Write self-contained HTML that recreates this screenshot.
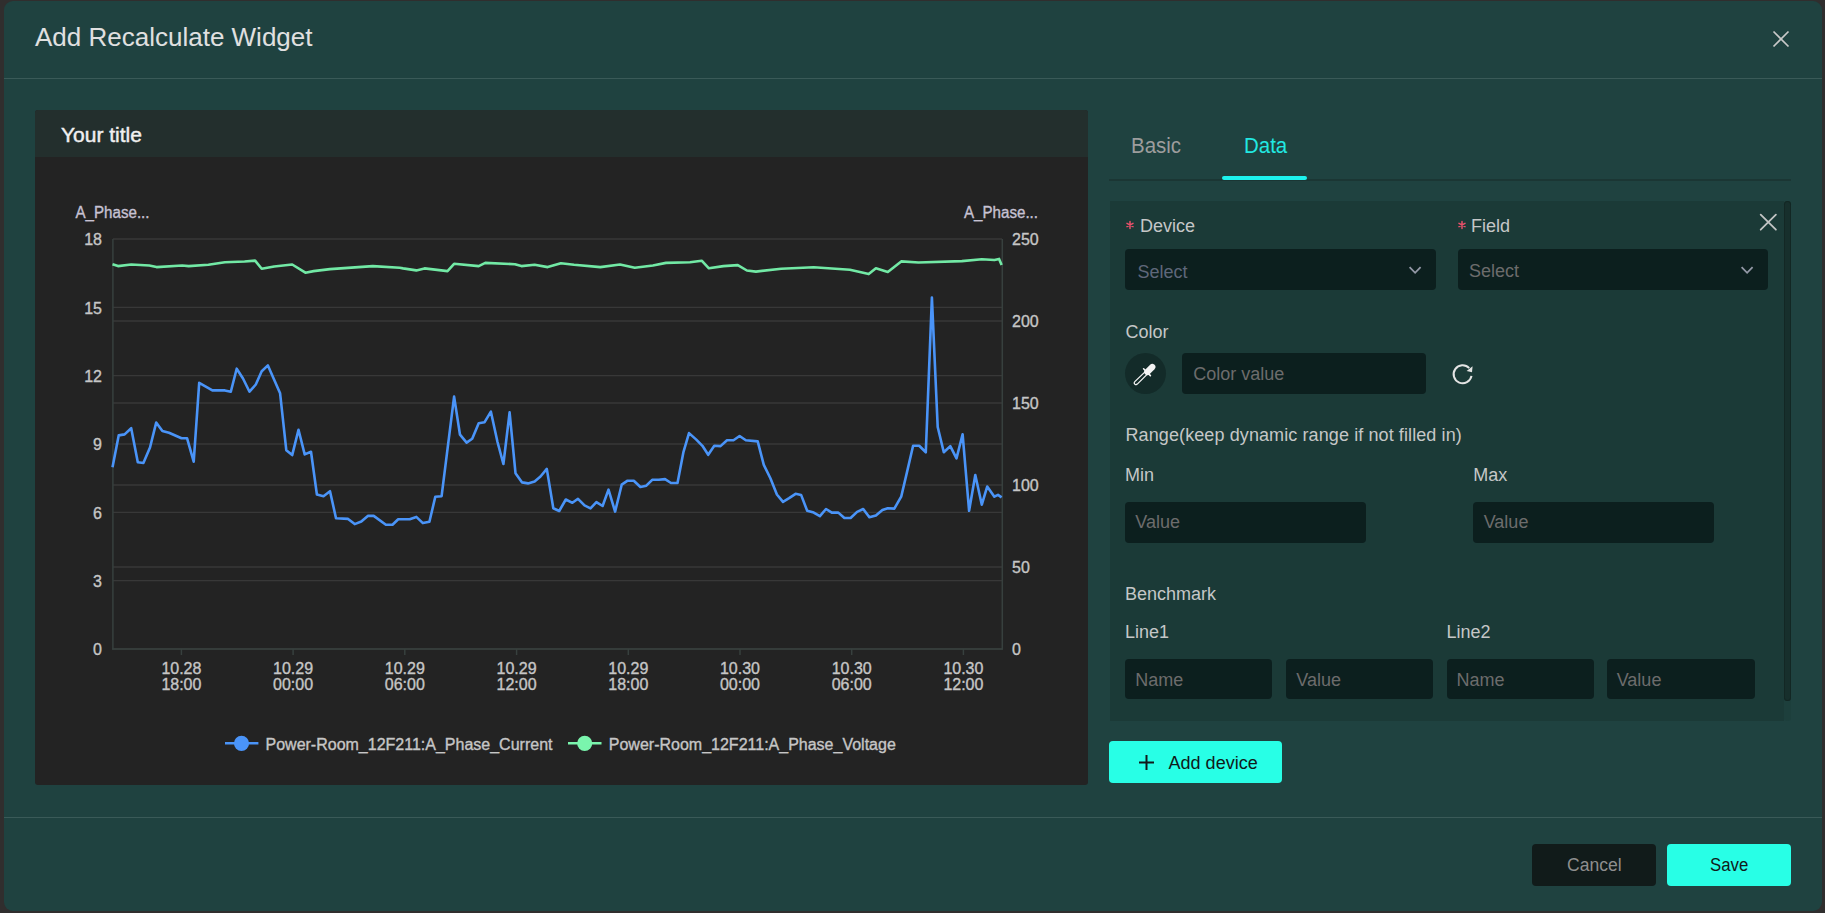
<!DOCTYPE html>
<html><head><meta charset="utf-8">
<style>
*{box-sizing:border-box;margin:0;padding:0}
html,body{width:1825px;height:913px;overflow:hidden;background:#302e2e;font-family:"Liberation Sans",sans-serif}
.a{position:absolute;white-space:nowrap}
#modal{position:absolute;left:4px;top:1px;width:1818px;height:910px;border-radius:9px;background:#1f4240}
.t{position:absolute;white-space:nowrap;line-height:1}
.inp{position:absolute;background:#0c1f1e;border-radius:4px}
.ph{position:absolute;white-space:nowrap;line-height:1;font-size:18px;color:#6c6c6c}
.lbl{position:absolute;white-space:nowrap;line-height:1;font-size:18px;color:#c5c7c7}
</style></head><body>
<div id="modal"></div>
<!-- header -->
<div class="t" style="left:35px;top:23.8px;font-size:26px;color:#e0e0e0">Add Recalculate Widget</div>
<svg class="a" style="left:1770.4px;top:28.4px" width="22" height="22" viewBox="0 0 22 22"><path d="M3.5 3.5 L18.5 18.5 M18.5 3.5 L3.5 18.5" stroke="#c9c9c9" stroke-width="1.7"/></svg>
<div class="a" style="left:4px;top:78px;width:1818px;height:1px;background:#3a5a58"></div>

<!-- chart panel -->
<div class="a" style="left:35px;top:110px;width:1053px;height:675px;background:#232323;border-radius:3px;overflow:hidden">
  <div class="a" style="left:0;top:0;width:1053px;height:47px;background:#232f2d"></div>
</div>
<div class="t" style="left:61px;top:124px;font-size:21px;color:#f0f0f0;-webkit-text-stroke:0.45px #f0f0f0">Your title</div>
<svg class="a" style="left:0;top:0;font-family:'Liberation Sans',sans-serif" width="1825" height="913" viewBox="0 0 1825 913"><!--CHART-->
<line x1="113" x2="1002" y1="649.00" y2="649.00" stroke="#383838" stroke-width="1.3"/>
<line x1="113" x2="1002" y1="580.67" y2="580.67" stroke="#383838" stroke-width="1.3"/>
<line x1="113" x2="1002" y1="512.33" y2="512.33" stroke="#383838" stroke-width="1.3"/>
<line x1="113" x2="1002" y1="444.00" y2="444.00" stroke="#383838" stroke-width="1.3"/>
<line x1="113" x2="1002" y1="375.67" y2="375.67" stroke="#383838" stroke-width="1.3"/>
<line x1="113" x2="1002" y1="307.33" y2="307.33" stroke="#383838" stroke-width="1.3"/>
<line x1="113" x2="1002" y1="567.00" y2="567.00" stroke="#383838" stroke-width="1.3"/>
<line x1="113" x2="1002" y1="485.00" y2="485.00" stroke="#383838" stroke-width="1.3"/>
<line x1="113" x2="1002" y1="403.00" y2="403.00" stroke="#383838" stroke-width="1.3"/>
<line x1="113" x2="1002" y1="321.00" y2="321.00" stroke="#383838" stroke-width="1.3"/>
<line x1="113" x2="1002" y1="239.00" y2="239.00" stroke="#383838" stroke-width="1.3"/>
<line x1="112.9" x2="112.9" y1="239" y2="649.5" stroke="#37403e" stroke-width="1.5"/>
<line x1="1002.3" x2="1002.3" y1="239" y2="649.5" stroke="#37403e" stroke-width="1.5"/>
<line x1="112" x2="1003" y1="649" y2="649" stroke="#37403e" stroke-width="1.5"/>
<line x1="181.4" x2="181.4" y1="649" y2="655" stroke="#37403e" stroke-width="1.5"/>
<line x1="293.1" x2="293.1" y1="649" y2="655" stroke="#37403e" stroke-width="1.5"/>
<line x1="404.8" x2="404.8" y1="649" y2="655" stroke="#37403e" stroke-width="1.5"/>
<line x1="516.6" x2="516.6" y1="649" y2="655" stroke="#37403e" stroke-width="1.5"/>
<line x1="628.3" x2="628.3" y1="649" y2="655" stroke="#37403e" stroke-width="1.5"/>
<line x1="740.0" x2="740.0" y1="649" y2="655" stroke="#37403e" stroke-width="1.5"/>
<line x1="851.7" x2="851.7" y1="649" y2="655" stroke="#37403e" stroke-width="1.5"/>
<line x1="963.4" x2="963.4" y1="649" y2="655" stroke="#37403e" stroke-width="1.5"/>
<g stroke="#c6c6c6" stroke-width="0.35">
<text x="102" y="655.2" text-anchor="end" fill="#c6c6c6" font-size="16">0</text>
<text x="102" y="586.9" text-anchor="end" fill="#c6c6c6" font-size="16">3</text>
<text x="102" y="518.5" text-anchor="end" fill="#c6c6c6" font-size="16">6</text>
<text x="102" y="450.2" text-anchor="end" fill="#c6c6c6" font-size="16">9</text>
<text x="102" y="381.9" text-anchor="end" fill="#c6c6c6" font-size="16">12</text>
<text x="102" y="313.5" text-anchor="end" fill="#c6c6c6" font-size="16">15</text>
<text x="102" y="245.2" text-anchor="end" fill="#c6c6c6" font-size="16">18</text>
<text x="1012" y="655.2" fill="#c6c6c6" font-size="16">0</text>
<text x="1012" y="573.2" fill="#c6c6c6" font-size="16">50</text>
<text x="1012" y="491.2" fill="#c6c6c6" font-size="16">100</text>
<text x="1012" y="409.2" fill="#c6c6c6" font-size="16">150</text>
<text x="1012" y="327.2" fill="#c6c6c6" font-size="16">200</text>
<text x="1012" y="245.2" fill="#c6c6c6" font-size="16">250</text>
<text x="75.5" y="218" fill="#c7c2d3" stroke="#c7c2d3" font-size="16" textLength="74" lengthAdjust="spacingAndGlyphs">A_Phase...</text>
<text x="964" y="218" fill="#c7c2d3" stroke="#c7c2d3" font-size="16" textLength="74" lengthAdjust="spacingAndGlyphs">A_Phase...</text>
<text x="181.4" y="673.8" text-anchor="middle" fill="#c6c6c6" font-size="16">10.28</text>
<text x="181.4" y="689.7" text-anchor="middle" fill="#c6c6c6" font-size="16">18:00</text>
<text x="293.1" y="673.8" text-anchor="middle" fill="#c6c6c6" font-size="16">10.29</text>
<text x="293.1" y="689.7" text-anchor="middle" fill="#c6c6c6" font-size="16">00:00</text>
<text x="404.8" y="673.8" text-anchor="middle" fill="#c6c6c6" font-size="16">10.29</text>
<text x="404.8" y="689.7" text-anchor="middle" fill="#c6c6c6" font-size="16">06:00</text>
<text x="516.6" y="673.8" text-anchor="middle" fill="#c6c6c6" font-size="16">10.29</text>
<text x="516.6" y="689.7" text-anchor="middle" fill="#c6c6c6" font-size="16">12:00</text>
<text x="628.3" y="673.8" text-anchor="middle" fill="#c6c6c6" font-size="16">10.29</text>
<text x="628.3" y="689.7" text-anchor="middle" fill="#c6c6c6" font-size="16">18:00</text>
<text x="740.0" y="673.8" text-anchor="middle" fill="#c6c6c6" font-size="16">10.30</text>
<text x="740.0" y="689.7" text-anchor="middle" fill="#c6c6c6" font-size="16">00:00</text>
<text x="851.7" y="673.8" text-anchor="middle" fill="#c6c6c6" font-size="16">10.30</text>
<text x="851.7" y="689.7" text-anchor="middle" fill="#c6c6c6" font-size="16">06:00</text>
<text x="963.4" y="673.8" text-anchor="middle" fill="#c6c6c6" font-size="16">10.30</text>
<text x="963.4" y="689.7" text-anchor="middle" fill="#c6c6c6" font-size="16">12:00</text>
</g>
<path d="M112.5 264.2 L118.0 266.1 L131.2 264.5 L149.3 265.5 L156.5 267.1 L182.2 265.5 L188.7 266.1 L208.4 264.8 L224.9 262.2 L244.6 261.5 L255.1 260.6 L261.7 268.8 L274.2 266.5 L292.2 264.5 L305.4 272.7 L313.6 271.1 L330.0 269.1 L372.8 266.1 L399.7 267.8 L403.1 268.4 L416.3 270.4 L424.5 268.4 L447.5 271.1 L454.1 263.8 L478.7 266.1 L485.3 262.9 L514.9 264.2 L521.4 266.1 L534.6 264.8 L547.7 267.1 L560.9 263.2 L574.0 264.8 L600.3 267.1 L620.0 264.5 L634.8 267.8 L652.9 265.5 L666.0 262.9 L690.0 262.2 L701.7 260.7 L708.9 268.3 L723.4 266.1 L737.8 265.1 L746.9 270.5 L755.9 271.6 L781.2 268.7 L813.7 267.2 L849.9 269.8 L868.7 274.1 L875.9 268.3 L887.8 271.9 L901.2 261.4 L918.5 262.5 L961.9 261.1 L981.8 259.3 L994.4 260.0 L999.1 258.9 L1001.6 265.1" fill="none" stroke="#72e9a5" stroke-width="2.6" stroke-linejoin="round"/>
<path d="M112.5 467.3 L118.7 435.4 L124.6 434.4 L131.2 428.2 L137.8 462.3 L143.4 463.0 L150.0 447.5 L156.2 422.6 L162.4 431.1 L169.0 432.8 L181.5 438.3 L187.1 438.3 L193.7 461.7 L199.2 382.8 L212.4 390.4 L224.9 390.4 L230.8 391.7 L236.7 368.7 L243.0 378.5 L249.5 391.7 L255.8 384.5 L261.7 371.3 L267.9 365.4 L280.1 393.3 L286.3 450.2 L292.2 455.1 L298.5 429.8 L304.7 454.4 L311.0 451.8 L316.9 494.5 L323.5 496.2 L330.0 491.2 L336.0 518.2 L348.1 518.9 L354.7 524.1 L361.3 521.5 L367.8 515.9 L373.7 515.9 L385.9 524.8 L392.5 524.8 L398.2 519.2 L409.7 519.2 L416.3 516.9 L422.9 523.1 L429.4 521.8 L435.3 496.8 L441.6 496.2 L454.1 396.6 L460.0 434.7 L466.6 442.6 L472.2 438.7 L478.7 423.2 L484.6 422.2 L490.9 411.7 L497.5 442.0 L503.4 464.0 L509.6 412.4 L515.5 473.2 L522.1 482.4 L528.0 483.4 L534.6 481.4 L540.5 476.5 L546.8 468.9 L553.3 508.3 L559.2 511.0 L565.8 499.5 L572.4 502.8 L578.0 498.8 L584.5 505.4 L590.5 508.3 L596.4 502.1 L602.6 506.0 L608.5 489.6 L615.1 511.6 L621.7 484.7 L627.6 480.7 L633.8 480.7 L640.4 487.0 L646.3 485.7 L652.2 479.8 L658.8 479.8 L665.0 479.1 L671.0 483.0 L677.5 483.0 L683.5 451.8 L689.0 433.1 L696.3 439.6 L702.4 445.8 L708.2 454.8 L714.3 445.8 L720.5 446.1 L727.0 440.3 L733.5 440.3 L739.6 436.0 L745.8 440.3 L757.7 441.4 L763.8 464.9 L770.4 478.3 L776.9 494.5 L783.0 501.8 L789.1 498.2 L795.6 493.8 L801.1 494.9 L807.2 510.8 L813.7 512.6 L819.9 516.2 L826.0 509.0 L831.8 512.6 L838.3 512.6 L844.4 518.0 L850.6 518.0 L857.1 511.9 L863.2 509.0 L869.4 517.3 L875.9 515.5 L882.4 510.1 L887.8 508.3 L894.3 508.6 L901.2 496.7 L907.0 472.1 L913.1 445.8 L919.2 445.8 L925.8 452.3 L931.9 297.6 L937.7 427.0 L943.8 452.3 L950.3 446.1 L956.5 458.4 L962.6 434.2 L969.1 510.8 L975.3 475.0 L981.8 504.7 L987.2 486.6 L994.4 496.7 L998.0 494.9 L1001.6 497.4" fill="none" stroke="#4a94f8" stroke-width="2.6" stroke-linejoin="round"/>
<line x1="225" x2="258.4" y1="743.2" y2="743.2" stroke="#4a94f8" stroke-width="2.6"/><circle cx="241.5" cy="743.3" r="7.6" fill="#4a94f8"/>
<text x="265.5" y="750" fill="#c6c6c6" stroke="#c6c6c6" stroke-width="0.35" font-size="16">Power-Room_12F211:A_Phase_Current</text>
<line x1="568" x2="601.5" y1="743.2" y2="743.2" stroke="#7af5ad" stroke-width="2.6"/><circle cx="584.7" cy="743.3" r="7.6" fill="#7af5ad"/>
<text x="608.8" y="750" fill="#c6c6c6" stroke="#c6c6c6" stroke-width="0.35" font-size="16">Power-Room_12F211:A_Phase_Voltage</text>
<!--/CHART--></svg>

<!-- right panel -->
<div class="t" style="left:1131px;top:135px;font-size:22px;color:#9d9d9d;transform:scaleX(0.93);transform-origin:0 0">Basic</div>
<div class="t" style="left:1243.8px;top:135px;font-size:22px;color:#22e8e2;transform:scaleX(0.93);transform-origin:0 0">Data</div>
<div class="a" style="left:1109px;top:178.5px;width:682px;height:2px;background:#1b3634"></div>
<div class="a" style="left:1222px;top:176px;width:85px;height:3.5px;background:#1df2ee;border-radius:2px"></div>

<div class="a" style="left:1109.5px;top:201px;width:674.5px;height:520px;background:#1b3a37"></div>
<div class="a" style="left:1784px;top:201px;width:7px;height:520px;background:#1d3f3c;border-radius:0 0 3px 3px"></div>
<div class="a" style="left:1783.5px;top:201px;width:7.5px;height:500px;background:#172f2c;border-radius:3.5px;box-shadow:inset 0 0 0 1px #132724"></div>

<!-- device / field -->
<svg class="a" style="left:1123.5px;top:218.5px" width="12" height="12" viewBox="0 0 12 12"><path d="M6 2.6 V9.4 M3 4.3 L9 7.7 M3 7.7 L9 4.3" stroke="#e9506a" stroke-width="1.5" stroke-linecap="round"/></svg>
<div class="lbl" style="left:1140px;top:217.3px">Device</div>
<svg class="a" style="left:1456px;top:218.5px" width="12" height="12" viewBox="0 0 12 12"><path d="M6 2.6 V9.4 M3 4.3 L9 7.7 M3 7.7 L9 4.3" stroke="#e9506a" stroke-width="1.5" stroke-linecap="round"/></svg>
<div class="lbl" style="left:1471px;top:217.3px">Field</div>
<svg class="a" style="left:1757px;top:211px" width="22" height="22" viewBox="0 0 22 22"><path d="M3.7 3.6 L18.9 18.7 M18.9 3.6 L3.7 18.7" stroke="#c2c4c4" stroke-width="1.8" stroke-linecap="round"/></svg>
<div class="inp" style="left:1125px;top:249px;width:311px;height:41px"></div>
<div class="ph" style="left:1137.5px;top:263px;color:#5f677a">Select</div>
<svg class="a" style="left:1407px;top:264px" width="16" height="12" viewBox="0 0 16 12"><path d="M2.6 3.2 L8.1 8.8 L13.6 3.2" fill="none" stroke="#9398a6" stroke-width="1.8"/></svg>
<div class="inp" style="left:1458px;top:249px;width:309.5px;height:41px"></div>
<div class="ph" style="left:1469px;top:262px">Select</div>
<svg class="a" style="left:1739px;top:264px" width="16" height="12" viewBox="0 0 16 12"><path d="M2.6 3.2 L8.1 8.8 L13.6 3.2" fill="none" stroke="#9398a6" stroke-width="1.8"/></svg>

<!-- color -->
<div class="lbl" style="left:1125.5px;top:322.5px">Color</div>
<div class="a" style="left:1125px;top:353px;width:41px;height:41px;border-radius:50%;background:#132b29"></div>
<svg class="a" style="left:1125px;top:353px" width="41" height="41" viewBox="0 0 41 41">
  <path d="M27.3 14 L22.3 19" stroke="#f4f4f4" stroke-width="6.2" stroke-linecap="round"/>
  <path d="M18.6 15.8 L25.4 22.6" stroke="#f4f4f4" stroke-width="1.6" stroke-linecap="round"/>
  <path d="M23.1 20.4 L12.3 31.1 Q10.9 32.3 9.7 31.1 Q8.5 29.9 9.8 28.6 L20.8 18.1" fill="none" stroke="#f4f4f4" stroke-width="1.3"/>
</svg>
<div class="inp" style="left:1182px;top:353px;width:244px;height:41px"></div>
<div class="ph" style="left:1193.3px;top:365.1px">Color value</div>
<svg class="a" style="left:1450px;top:361px" width="26" height="26" viewBox="0 0 26 26"><path d="M21.5 14.9 A9 9 0 1 1 19.2 7.1" fill="none" stroke="#e4e4e4" stroke-width="2"/><path d="M22.6 5.2 L22 11.3 L16.6 10 Z" fill="#e4e4e4"/></svg>

<!-- range -->
<div class="lbl" style="left:1125.5px;top:426.4px;letter-spacing:0.1px">Range(keep dynamic range if not filled in)</div>
<div class="lbl" style="left:1125px;top:465.8px">Min</div>
<div class="lbl" style="left:1473.3px;top:465.8px">Max</div>
<div class="inp" style="left:1125px;top:501.6px;width:241.3px;height:41px"></div>
<div class="ph" style="left:1135.3px;top:513.2px">Value</div>
<div class="inp" style="left:1473px;top:501.6px;width:241.3px;height:41px"></div>
<div class="ph" style="left:1483.7px;top:513.2px">Value</div>

<!-- benchmark -->
<div class="lbl" style="left:1125px;top:585.1px">Benchmark</div>
<div class="lbl" style="left:1125px;top:623.1px">Line1</div>
<div class="lbl" style="left:1446.4px;top:623.1px">Line2</div>
<div class="inp" style="left:1125px;top:658.8px;width:147.4px;height:40.3px"></div>
<div class="ph" style="left:1135.3px;top:670.8px">Name</div>
<div class="inp" style="left:1285.9px;top:658.8px;width:147.5px;height:40.3px"></div>
<div class="ph" style="left:1296.3px;top:670.8px">Value</div>
<div class="inp" style="left:1447.2px;top:658.8px;width:146.4px;height:40.3px"></div>
<div class="ph" style="left:1456.5px;top:670.8px">Name</div>
<div class="inp" style="left:1606.6px;top:658.8px;width:148px;height:40.3px"></div>
<div class="ph" style="left:1616.7px;top:670.8px">Value</div>

<!-- add device -->
<div class="a" style="left:1109px;top:741px;width:173px;height:42.3px;border-radius:4px;background:#28ffe6"></div>
<svg class="a" style="left:1137px;top:753px" width="19" height="19" viewBox="0 0 19 19"><path d="M9.5 2 V17 M2 9.5 H17" stroke="#111a1a" stroke-width="2"/></svg>
<div class="t" style="left:1168.6px;top:753.6px;font-size:18px;color:#101a1a">Add device</div>

<!-- footer -->
<div class="a" style="left:4px;top:817px;width:1818px;height:1px;background:#3a5a58"></div>
<div class="a" style="left:1531.7px;top:844px;width:124.3px;height:41.5px;border-radius:4px;background:#111b1a"></div>
<div class="t" style="left:1566.7px;top:856.2px;font-size:18px;color:#8e8e8e;transform:scaleX(0.975);transform-origin:0 0">Cancel</div>
<div class="a" style="left:1666.5px;top:844px;width:124.5px;height:42px;border-radius:4px;background:#28ffe6"></div>
<div class="t" style="left:1709.7px;top:856.2px;font-size:18px;color:#111a1a;transform:scaleX(0.932);transform-origin:0 0">Save</div>

</body></html>
